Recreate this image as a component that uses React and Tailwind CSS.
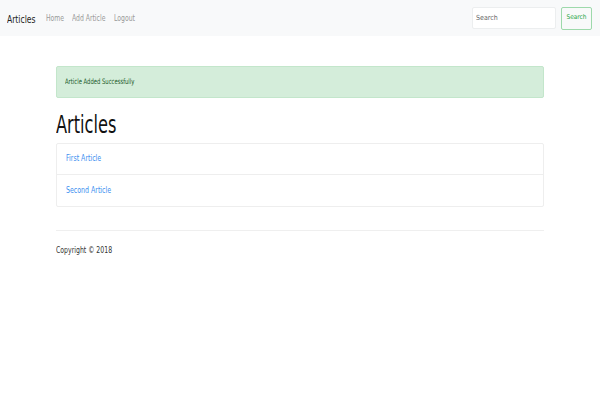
const font = { fontFamily: '"DejaVu Sans Condensed", "Open Sans", sans-serif' };

export default function App() {
  return (
    <div className="min-h-[400px] w-[600px] bg-white text-[#212529]" style={font}>
      <nav className="flex h-[36px] items-center justify-between bg-[#f8f9fa] pl-[7px] pr-[8px]">
        <div className="mt-[2px] flex items-center whitespace-nowrap">
          <a className="inline-block w-[29px] origin-left scale-x-[0.85] text-[10px] text-[#222]">Articles</a>
          <a className="ml-[10px] inline-block w-[19px] origin-left scale-x-[0.85] text-[8px] text-[#999]">Home</a>
          <a className="ml-[7px] inline-block w-[35px] origin-left scale-x-[0.85] text-[8px] text-[#999]">Add Article</a>
          <a className="ml-[7px] inline-block w-[21px] origin-left scale-x-[0.85] text-[8px] text-[#999]">Logout</a>
        </div>
        <form className="flex items-center gap-[5px]">
          <input
            placeholder="Search"
            className="h-[22px] w-[84px] rounded-[2px] border border-[#eceeef] bg-white px-[3px] text-[7px] placeholder:text-[#666]"
          />
          <button className="h-[23px] w-[31px] rounded-[2px] border border-[#9dd9ab] text-[6.5px] text-[#28a745]">
            Search
          </button>
        </form>
      </nav>
      <main className="mx-[56px] mt-[30px] w-[488px]">
        <div className="flex h-[32px] items-center rounded-[2px] border border-[#c3e6cb] bg-[#d4edda] px-[8px] text-[#155724]">
          <span className="inline-block origin-left scale-x-[0.78] whitespace-nowrap text-[7.5px]">Article Added Successfully</span>
        </div>
        <h1 className="mt-[13px] origin-left scale-x-[0.75] text-[24px] leading-[28px] text-[#111]">Articles</h1>
        <ul className="mt-[4px] rounded-[2px] border border-[#eeeeee]">
          <li className="flex h-[31px] items-center border-b border-[#eeeeee] px-[9px] text-[8px] text-[#3b8ff0]">
            <a className="inline-block origin-left scale-x-[0.87]">First Article</a>
          </li>
          <li className="flex h-[31px] items-center px-[9px] text-[8px] text-[#3b8ff0]">
            <a className="inline-block origin-left scale-x-[0.87]">Second Article</a>
          </li>
        </ul>
        <hr className="mt-[23px] border-[#efefef]" />
        <p className="mt-[14px] origin-left scale-x-[0.86] text-[8px] text-[#333]">Copyright © 2018</p>
      </main>
    </div>
  );
}
